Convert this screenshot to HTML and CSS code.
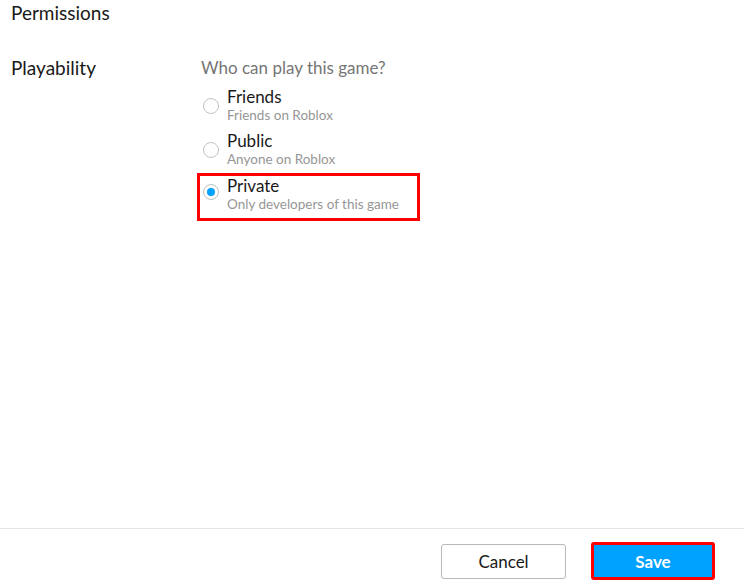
FILE: index.html
```html
<!DOCTYPE html>
<html>
<head>
<meta charset="utf-8">
<link rel="stylesheet" href="styles.css">
</head>
<body>
<div class="page">
  <div class="content">
    <h1 class="title">Permissions</h1>
    <div class="row">
      <div class="label">Playability</div>
      <div class="options">
        <div class="question">Who can play this game?</div>
        <div class="option">
          <span class="radio"></span>
          <div class="otext">
            <div class="oname">Friends</div>
            <div class="odesc">Friends on Roblox</div>
          </div>
        </div>
        <div class="option">
          <span class="radio"></span>
          <div class="otext">
            <div class="oname">Public</div>
            <div class="odesc">Anyone on Roblox</div>
          </div>
        </div>
        <div class="option selected">
          <span class="radio checked"></span>
          <div class="otext">
            <div class="oname">Private</div>
            <div class="odesc">Only developers of this game</div>
          </div>
        </div>
      </div>
    </div>
  </div>
  <div class="footer">
    <button class="btn cancel">Cancel</button>
    <button class="btn save">Save</button>
  </div>
</div>
</body>
</html>
```
FILE: styles.css
```css
html, body {
  margin: 0;
  padding: 0;
  background: #fff;
}
.page {
  width: 744px;
  height: 586px;
  display: flex;
  flex-direction: column;
  font-family: "Lato", "Noto Sans", sans-serif;
  color: #191919;
}
.content {
  flex: 1;
}
.title {
  margin: 0;
  padding: 0 0 0 11px;
  font-size: 19px;
  font-weight: 400;
  line-height: 26px;
}
.row {
  display: flex;
  margin-top: 30px;
}
.label {
  width: 190px;
  padding-left: 11px;
  font-size: 19px;
  line-height: 24px;
}
.options {
  display: flex;
  flex-direction: column;
}
.question {
  color: #757575;
  font-size: 17px;
  line-height: 24px;
  margin-bottom: 7px;
}
.option {
  display: flex;
  align-items: flex-start;
  height: 44px;
  box-sizing: border-box;
}
.option.selected {
  margin-left: -4px;
  padding-left: 1px;
  border: 3px solid #ff0000;
  margin-top: -2px;
  width: 223px;
  height: 48px;
}
.radio {
  width: 16px;
  height: 16px;
  border: 1px solid #c2c2c2;
  border-radius: 50%;
  margin: 11px 8px 0 2px;
  box-sizing: border-box;
  flex: none;
  position: relative;
}
.option.selected .radio {
  margin-top: 8px;
}
.radio.checked::after {
  content: "";
  position: absolute;
  left: 3px;
  top: 3px;
  width: 8px;
  height: 8px;
  border-radius: 50%;
  background: #00a2ff;
}
.oname {
  font-size: 17px;
  line-height: 20px;
}
.odesc {
  font-size: 13.5px;
  line-height: 16px;
  color: #969696;
}
.footer {
  border-top: 1px solid #e6e6e6;
  height: 58px;
  display: flex;
  justify-content: flex-end;
  align-items: flex-start;
  padding-top: 14px;
  box-sizing: border-box;
  padding-right: 29px;
  gap: 25px;
  flex: none;
}
.btn {
  font-family: "Lato", "Noto Sans", sans-serif;
  font-size: 17px;
  border-radius: 3px;
  box-sizing: border-box;
  cursor: pointer;
  padding: 0;
}
.cancel {
  margin-top: 1px;
  height: 35px;
  width: 125px;
  background: #fff;
  border: 1px solid #b8b8b8;
  color: #191919;
}
.save {
  margin-top: -1px;
  height: 38px;
  width: 124px;
  background: #00a2ff;
  border: 3px solid #ff0000;
  color: #fff;
  font-weight: 700;
}
```
